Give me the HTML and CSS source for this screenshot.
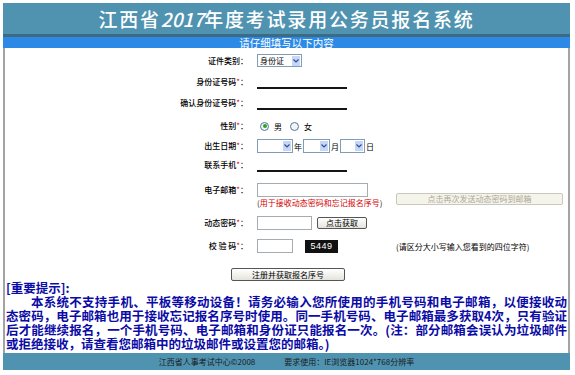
FILE: index.html
```html
<!DOCTYPE html>
<html lang="zh-CN">
<head>
<meta charset="utf-8">
<title>江西省2017年度考试录用公务员报名系统</title>
<link rel="stylesheet" href="styles.css">
</head>
<body>
<div class="page">
  <header class="banner"><h1>江西省<i class="year">2017</i>年度考试录用公务员报名系统</h1></header>
  <div class="bar">请仔细填写以下内容</div>
  <main class="content">
    <form class="form">
      <div class="row">
        <label class="lbl">证件类别：</label>
        <div class="ctl">
          <span class="sel sel-id"><span class="sel-text">身份证</span><span class="sel-arrow"><svg width="6" height="4" viewBox="0 0 6 4"><path d="M0.5 0.5 L3 3 L5.5 0.5" fill="none" stroke="#2f4f8f" stroke-width="1.2"/></svg></span></span>
        </div>
      </div>
      <div class="row">
        <label class="lbl">身份证号码<b class="req">*</b>：</label>
        <div class="ctl"><input class="line-field" type="text"></div>
      </div>
      <div class="row">
        <label class="lbl">确认身份证号码<b class="req">*</b>：</label>
        <div class="ctl"><input class="line-field" type="text"></div>
      </div>
      <div class="row row-gender">
        <label class="lbl">性别<b class="req">*</b>：</label>
        <div class="ctl">
          <span class="radio checked"></span><span class="opt">男</span>
          <span class="radio second"></span><span class="opt">女</span>
        </div>
      </div>
      <div class="row row-date">
        <label class="lbl">出生日期<b class="req">*</b>：</label>
        <div class="ctl">
          <span class="sel sel-y"><span class="sel-text"></span><span class="sel-arrow"><svg width="6" height="4" viewBox="0 0 6 4"><path d="M0.5 0.5 L3 3 L5.5 0.5" fill="none" stroke="#2f4f8f" stroke-width="1.2"/></svg></span></span><span class="unit">年</span>
          <span class="sel sel-m"><span class="sel-text"></span><span class="sel-arrow"><svg width="6" height="4" viewBox="0 0 6 4"><path d="M0.5 0.5 L3 3 L5.5 0.5" fill="none" stroke="#2f4f8f" stroke-width="1.2"/></svg></span></span><span class="unit">月</span>
          <span class="sel sel-d"><span class="sel-text"></span><span class="sel-arrow"><svg width="6" height="4" viewBox="0 0 6 4"><path d="M0.5 0.5 L3 3 L5.5 0.5" fill="none" stroke="#2f4f8f" stroke-width="1.2"/></svg></span></span><span class="unit">日</span>
        </div>
      </div>
      <div class="row row-mobile">
        <label class="lbl">联系手机<b class="req">*</b>：</label>
        <div class="ctl"><input class="line-field" type="text"></div>
      </div>
      <div class="row row-email">
        <label class="lbl">电子邮箱<b class="req">*</b>：</label>
        <div class="ctl">
          <input class="field field-email" type="text">
          <div class="note"><span class="paren">(</span>用于接收动态密码和忘记报名序号<span class="paren">)</span></div>
        </div>
        <div class="extra"><button type="button" class="btn btn-disabled" disabled>点击再次发送动态密码到邮箱</button></div>
      </div>
      <div class="row row-code">
        <label class="lbl">动态密码<b class="req">*</b>：</label>
        <div class="ctl">
          <input class="field field-code" type="text">
          <button type="button" class="btn btn-get">点击获取</button>
        </div>
      </div>
      <div class="row row-captcha">
        <label class="lbl">校 验 码<b class="req">*</b>：</label>
        <div class="ctl">
          <input class="field field-captcha" type="text">
          <span class="captcha">5449</span>
        </div>
        <div class="extra hint">(请区分大小写输入您看到的四位字符)</div>
      </div>
      <div class="submit-row">
        <button type="button" class="btn btn-submit">注册并获取报名序号</button>
      </div>
    </form>
    <section class="notice">
      <h2 class="notice-title">[重要提示]:</h2>
      <p class="notice-text">
        <span class="ln first">本系统不支持手机、平板等移动设备！请务必输入您所使用的手机号码和电子邮箱，以便接收动</span>
        <span class="ln">态密码，电子邮箱也用于接收忘记报名序号时使用。同一手机号码、电子邮箱最多获取4次，只有验证</span>
        <span class="ln">后才能继续报名，一个手机号码、电子邮箱和身份证只能报名一次。(注：部分邮箱会误认为垃圾邮件</span>
        <span class="ln last">或拒绝接收，请查看您邮箱中的垃圾邮件或设置您的邮箱。)</span>
      </p>
    </section>
  </main>
  <footer class="footer">
    <span>江西省人事考试中心©2008</span>
    <span>要求使用：IE浏览器1024*768分辨率</span>
  </footer>
</div>
</body>
</html>
```

FILE: styles.css
```css
* { box-sizing: border-box; }

body {
  margin: 3px 0 0 3px;
  background: #ffffff;
  font-family: "Noto Sans CJK SC", "Liberation Sans", sans-serif;
  color: #000;
}

.page {
  width: 567px;
}

.banner {
  height: 34px;
  background: #4f93b1;
  border-bottom: 3px solid #3d6c82;
  display: flex;
  align-items: center;
  justify-content: center;
}

.banner h1 {
  margin: 0;
  font-size: 19px;
  line-height: 1;
  font-weight: 500;
  letter-spacing: 1.8px;
  color: #ffffff;
}

.year {
  font-style: italic;
  letter-spacing: 0;
}

.bar {
  height: 11px;
  background: #2c8ae6;
  color: #ffffff;
  font-size: 10.5px;
  line-height: 11px;
  text-align: center;
}

.content {
  background: #ffffff;
  border-left: 2px solid #a3a3a3;
  border-right: 2px solid #a3a3a3;
  padding-bottom: 2px;
}

.form {
  padding-top: 2px;
}

.row {
  display: grid;
  grid-template-columns: 243px 130px 1fr;
  column-gap: 9px;
  align-items: center;
  height: 21px;
}

.row-gender { height: 26px; }
.row-date { height: 14px; }
.row-mobile { height: 24px; }
.row-email { height: 34px; align-items: start; }
.row-code { height: 24px; }
.row-captcha { height: 22px; }

.lbl {
  font-size: 8px;
  line-height: 14px;
  font-weight: 500;
  text-align: right;
  white-space: nowrap;
}

.req {
  color: #e00000;
  font-weight: 400;
}

.ctl {
  display: flex;
  align-items: center;
}

.row-email .lbl,
.row-email .ctl,
.row-email .extra {
  margin-top: 6px;
}

.row-email .ctl {
  flex-direction: column;
  align-items: flex-start;
}

.line-field {
  display: block;
  width: 90px;
  height: 14px;
  margin: 0;
  padding: 0;
  border: 0;
  border-bottom: 2px solid #151515;
  background: transparent;
}

.field {
  display: block;
  height: 14px;
  margin: 0;
  padding: 0;
  border: 1px solid #a5acb2;
  background: #fff;
}

.field-email { width: 111px; }
.field-code { width: 55px; }
.field-captcha { width: 36px; }

.note {
  margin-top: 1px;
  font-size: 8px;
  line-height: 10px;
  color: #d40000;
  white-space: nowrap;
}

.paren { color: #222; }

.sel {
  display: flex;
  align-items: center;
  height: 14px;
  border: 1px solid #7f9db9;
  background: #ffffff;
  font-size: 8px;
}

.sel-id { width: 45px; height: 13px; }
.sel-y { width: 36px; }
.sel-m { width: 27px; }
.sel-d { width: 25px; }

.sel-text {
  flex: 1;
  padding-left: 2px;
  line-height: 11px;
}

.sel-arrow {
  width: 8px;
  height: 10px;
  margin-right: 1px;
  background: #c6d6f7;
  display: flex;
  align-items: center;
  justify-content: center;
}

.unit {
  font-size: 8px;
  margin: 0 1px;
}

.radio {
  width: 9px;
  height: 9px;
  border-radius: 50%;
  border: 1px solid #5277a0;
  background: #f4f4f4;
  display: inline-flex;
  align-items: center;
  justify-content: center;
  margin-left: 3px;
}

.radio.second { margin-left: 8px; }

.radio.checked::after {
  content: "";
  width: 4px;
  height: 4px;
  border-radius: 50%;
  background: #27a327;
}

.opt {
  font-size: 8px;
  margin-left: 5px;
}

.btn {
  font-family: "Noto Sans CJK SC", "Liberation Sans", sans-serif;
  font-size: 8px;
  line-height: 10px;
  padding: 0;
  margin: 0;
  border: 1px solid #555;
  border-radius: 2px;
  background: linear-gradient(#ffffff, #e4e4dc);
  color: #000;
}

.btn-get {
  width: 50px;
  height: 12px;
  margin-left: 5px;
}

.btn-disabled {
  width: 167px;
  height: 12px;
  border-color: #cac8bb;
  background: #f5f4ea;
  color: #aca899;
}

.captcha {
  margin-left: 12px;
  width: 33px;
  height: 13px;
  background: #111111;
  color: #ffffff;
  font-family: "Liberation Sans", sans-serif;
  font-size: 9px;
  letter-spacing: 0.5px;
  display: flex;
  align-items: center;
  justify-content: center;
}

.hint {
  font-size: 8px;
  white-space: nowrap;
}

.submit-row {
  margin-top: 11px;
  display: flex;
  justify-content: center;
}

.btn-submit {
  width: 114px;
  height: 13px;
  margin-left: 3px;
}

.notice {
  padding-left: 1px;
  padding-right: 1px;
  color: #0b0ba6;
}

.notice-title {
  margin: 0;
  font-size: 12.5px;
  line-height: 14px;
  font-weight: 700;
}

.notice-text {
  margin: 0;
  font-size: 12.5px;
  line-height: 14px;
  font-weight: 700;
}

.ln {
  display: block;
  text-align: justify;
  text-align-last: justify;
  white-space: nowrap;
}

.ln.first { text-indent: 2em; }
.ln.last { text-align-last: left; }

.footer {
  height: 17px;
  background: #4f93b1;
  display: flex;
  align-items: center;
  justify-content: center;
  gap: 29px;
  font-size: 8px;
  color: #1a1a1a;
}
```
